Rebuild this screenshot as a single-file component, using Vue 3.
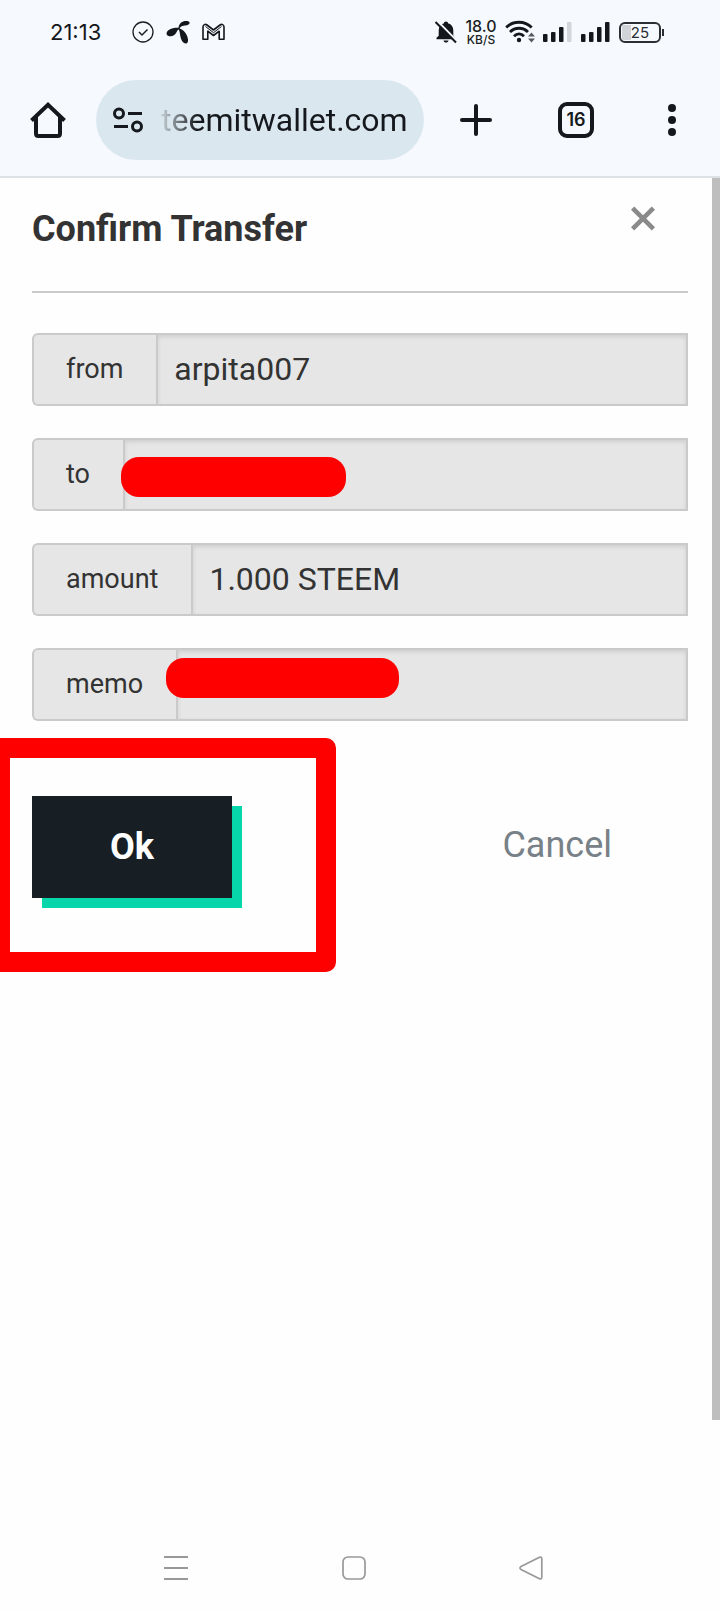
<script setup>
import { ref } from 'vue'

const url = ref('teemitwallet.com')
const fields = [
  { id: 'from', label: 'from', value: 'arpita007' },
  { id: 'to', label: 'to', value: '', hidden: true },
  { id: 'amount', label: 'amount', value: '1.000 STEEM' },
  { id: 'memo', label: 'memo', value: '', hidden: true },
]
</script>

<template>
  <div class="page">
    <header class="chrome">
      <div class="status">
        <div class="status-left">
          <span class="time">21:13</span>
          <svg width="24" height="24" viewBox="0 0 24 24" fill="none" stroke="#1b1f24">
            <circle cx="12" cy="12" r="10" stroke-width="1.300" />
            <path d="M8 12l3 3 5.500-5.500" stroke-width="1.500" />
          </svg>
          <svg width="24" height="24" viewBox="0 0 24 24" fill="#14181c">
            <path d="M12.500 7.800C13 3.500 16 1 20 1c2.200 0 3.600.6 3.600 1.800 0 2-3.100 2.700-6 3-2.200.3-3.500 1.200-4 2.600 3.200 1 5.600 3.400 7.300 7.200 1.500 3.600 1.700 7-.4 7.800-2.300.8-4.700-1.700-5.700-5.300-.9-3.200-.9-6.200-2-8.500-1 .1-1.500 1.300-2.300 2.700-1.300 2.400-3.500 4-6 4-2.500.1-4.500-1.500-3.800-3.800C1.800 9.500 7 7.500 12.500 7.800z" />
          </svg>
          <svg width="24" height="24" viewBox="0 0 24 24" fill="none" stroke="#14181c" stroke-width="1.600" stroke-linejoin="round">
            <path d="M2 19.200V7c0-2.400 2.300-3.300 4-2l6.500 5L19 5c1.700-1.300 4-.4 4 2v12.200h-4.800v-8l-5.700 4.300-5.700-4.300v8z" />
            <path d="M4.500 6.500l8 6.200 8-6.200" stroke-width="1" />
          </svg>
        </div>
        <div class="status-right">
          <svg width="22" height="24" viewBox="0 0 22 24">
            <path d="M11 1.500c1.300 0 2 .8 2 1.800 3.600 1 5.300 3.800 5.300 7.200v5.200l1.700 2v1.600H1.500v-1.600l2.200-2v-5.200C3.700 7 5.700 4.300 9 3.300c0-1 .7-1.800 2-1.800zM8.500 20.500h5c-.3 1.500-1.200 2-2.500 2s-2.200-.5-2.500-2z" fill="#14181c" />
            <path d="M2.200.8l20 20.500" stroke="#f6f9fe" stroke-width="2" />
            <path d="M.5 2l20.500 20.500" stroke="#14181c" stroke-width="2" />
          </svg>
          <div class="speed"><b>18.0</b><span>KB/S</span></div>
          <svg width="30" height="24" viewBox="0 0 30 24" fill="none" stroke="#14181c" stroke-width="2.800">
            <path d="M1.200 7.500c7-7 18.500-7 25.500 0M5 12c5-5 13-5 18 0M9 16.200c3-3 7-3 10 0" />
            <circle cx="14" cy="20" r="2.200" fill="#14181c" stroke="none" />
            <path d="M23 16.500l3.500-4 3.500 4zM23 18.500l3.500 4 3.500-4z" fill="#555a60" stroke="none" />
          </svg>
          <svg width="30" height="24" viewBox="0 0 30 24" fill="#14181c">
            <rect x="0" y="14" width="4.500" height="8" rx="1" /><rect x="8" y="12" width="4.500" height="10" rx="1" />
            <rect x="16" y="7" width="4.500" height="15" rx="1" /><rect x="24" y="2" width="4.500" height="20" rx="1" fill="#d3d6da" />
          </svg>
          <svg width="30" height="24" viewBox="0 0 30 24" fill="#14181c">
            <rect x="0" y="14" width="4.500" height="8" rx="1" /><rect x="8" y="12" width="4.500" height="10" rx="1" />
            <rect x="16" y="7" width="4.500" height="15" rx="1" /><rect x="24" y="2" width="4.500" height="20" rx="1" />
          </svg>
          <div class="battery"><span>25</span></div>
        </div>
      </div>

      <div class="toolbar">
        <button class="tool" type="button" aria-label="Home">
          <svg width="36" height="36" viewBox="0 0 36 36" fill="none" stroke="#15191d" stroke-width="4">
            <path d="M1.500 18.500L18 2.800l16.500 15.700" stroke-linejoin="miter" />
            <path d="M6 15v16.500c0 1.600.9 2.500 2.500 2.500h19c1.600 0 2.500-.9 2.500-2.500V15" />
          </svg>
        </button>
        <div class="address">
          <svg width="32" height="28" viewBox="0 0 32 28" fill="none" stroke="#15191d" stroke-width="3">
            <circle cx="7" cy="7.500" r="4.500" /><path d="M16 7.500h14M2 20.500h14" /><circle cx="25" cy="20.500" r="4.500" />
          </svg>
          <input v-model="url" class="url" type="text" aria-label="Address" />
        </div>
        <button class="tool tool-new" type="button" aria-label="New tab">
          <svg width="32" height="32" viewBox="0 0 32 32" stroke="#15191d" stroke-width="4" stroke-linecap="round">
            <path d="M16 2v28M2 16h28" />
          </svg>
        </button>
        <button class="tool" type="button" aria-label="Open tabs"><span class="tabs">16</span></button>
        <button class="tool" type="button" aria-label="Menu">
          <svg width="8" height="32" viewBox="0 0 8 32" fill="#15191d">
            <circle cx="4" cy="4" r="4" /><circle cx="4" cy="16" r="4" /><circle cx="4" cy="28" r="4" />
          </svg>
        </button>
      </div>
    </header>

    <main class="content">
      <div class="heading">
        <h1>Confirm Transfer</h1>
        <button class="close" type="button" aria-label="Close">
          <svg width="24" height="25" viewBox="0 0 24 25" stroke="#8a8a8a" stroke-width="4.600">
            <path d="M1.600 2.100l20.800 20.800M22.400 2.100L1.600 22.900" />
          </svg>
        </button>
      </div>
      <form class="form" @submit.prevent>
        <div v-for="f in fields" :key="f.id" class="field">
          <label :for="f.id">{{ f.label }}</label>
          <input :id="f.id" type="text" :value="f.value" readonly />
          <span v-if="f.hidden" class="mark" :class="'mark-' + f.id"></span>
        </div>
        <div class="actions">
          <button class="ok" type="submit">Ok</button>
          <button class="cancel" type="button">Cancel</button>
          <span class="frame"></span>
        </div>
      </form>
      <div class="scrollbar"></div>
    </main>

    <nav class="nav">
      <button type="button" aria-label="Recent apps">
        <svg width="24" height="24" viewBox="0 0 24 24" stroke="#989898" stroke-width="2"><path d="M0 1h24M0 12h24M0 23h24" /></svg>
      </button>
      <button type="button" aria-label="Home screen">
        <svg width="24" height="24" viewBox="0 0 24 24" fill="none" stroke="#989898" stroke-width="1.700"><rect x="1" y="1" width="22" height="22" rx="5" /></svg>
      </button>
      <button type="button" aria-label="Back">
        <svg width="24" height="24" viewBox="0 0 24 24" fill="none" stroke="#989898" stroke-width="1.700"><path d="M20.500 1.200L2 10.500c-1.300.7-1.300 2.300 0 3l18.500 9.300c1.200.5 2.300-.2 2.300-1.500V2.700c0-1.300-1.100-2-2.300-1.500z" /></svg>
      </button>
    </nav>
  </div>
</template>

<style>
body { margin: 0; background: #fefefe; }
</style>

<style scoped>
* { box-sizing: border-box; }
.page {
  display: flex;
  flex-direction: column;
  min-height: 100vh;
  overflow: hidden;
  font-family: Roboto, "Liberation Sans", sans-serif;
  color: #333;
  background: #fefefe;
}
button { padding: 0; border: 0; background: none; font-family: inherit; cursor: pointer; }
svg { display: block; flex: none; overflow: visible; }

.chrome { background: #f6f9fe; border-bottom: 2px solid #dbe3e8; }
.status { display: flex; justify-content: space-between; align-items: center; height: 64px; padding: 0 56px 0 50px; }
.status-left { display: flex; align-items: center; gap: 11px; }
.time { width: 70px; font: 400 22px/24px Inter, sans-serif; color: #14181c; }
.status-right { display: flex; align-items: center; gap: 8px; }
.speed { display: flex; flex-direction: column; align-items: center; width: 32px; font: 500 12px/12px Inter, sans-serif; color: #1b1f24; }
.speed b { font-size: 16px; line-height: 16px; font-weight: 500; }
.battery {
  position: relative;
  width: 42px;
  height: 21px;
  margin-right: 3px;
  border: 2px solid #2b2f34;
  border-radius: 6px;
  background: linear-gradient(#d0d3d7, #d0d3d7) 1px 1px / 9px 15px no-repeat;
  font: 15px/17px Inter, sans-serif;
  text-align: center;
  color: #2b2f34;
}
.battery::after { content: ""; position: absolute; right: -5px; top: 5px; width: 2px; height: 7px; background: #2b2f34; }

.toolbar { display: flex; align-items: center; height: 112px; }
.tool { display: flex; align-items: center; justify-content: center; width: 96px; height: 80px; }
.tool-new { width: 104px; }
.address {
  display: flex;
  flex: 1;
  align-items: center;
  gap: 17px;
  min-width: 0;
  height: 80px;
  padding: 0 16px;
  border-radius: 40px;
  background: #dbe7ee;
}
.url {
  flex: 1;
  min-width: 0;
  padding: 0;
  border: 0;
  outline: 0;
  background: none;
  font: 32px/40px Roboto, sans-serif;
  color: #15191d;
  -webkit-mask-image: linear-gradient(90deg, rgba(0, 0, 0, 0.1), #000 36px);
  mask-image: linear-gradient(90deg, rgba(0, 0, 0, 0.1), #000 36px);
}
.tabs {
  width: 36px;
  height: 36px;
  border: 4px solid #15191d;
  border-radius: 9px;
  font: 600 18px/28px Inter, sans-serif;
  text-align: center;
  color: #15191d;
}

.content { position: relative; flex: 1; padding: 26px 32px 40px; }
.heading { display: flex; justify-content: space-between; align-items: flex-start; padding-bottom: 37px; border-bottom: 2px solid #cacaca; }
h1 { margin: 0; font-size: 36px; line-height: 50px; font-weight: 700; }
.close { margin: 2px 33px 0 0; }
.form { display: flex; flex-direction: column; gap: 32px; padding-top: 40px; }
.field { position: relative; display: flex; height: 73px; }
.field label {
  display: flex;
  align-items: center;
  padding: 0 33px 1px 32px;
  border: 2px solid #cacaca;
  border-right: 0;
  border-radius: 6px 0 0 6px;
  background: #e6e6e6;
  font-size: 27px;
}
.field input {
  flex: 1;
  min-width: 0;
  padding: 0 16px 1px;
  border: 2px solid #cacaca;
  border-radius: 0;
  outline: 0;
  background: #e6e6e6;
  box-shadow: inset 0 2px 4px rgba(10, 10, 10, 0.1);
  font: 32px/40px Roboto, sans-serif;
  color: #333;
}
.mark { position: absolute; height: 40px; border-radius: 18px; background: #f00; }
.mark-to { left: 89px; top: 19px; width: 225px; }
.mark-memo { left: 134px; top: 10px; width: 233px; }

.actions { position: relative; display: flex; justify-content: space-between; align-items: flex-start; margin-top: 43px; }
.ok {
  width: 200px;
  height: 102px;
  background: #171f24;
  box-shadow: 10px 10px 0 #06d6a9;
  font-size: 36px;
  font-weight: 700;
  color: #fff;
}
.cancel { height: 98px; padding: 0 76px; font-size: 36px; color: #788187; }
.frame {
  position: absolute;
  left: -42px;
  top: -58px;
  width: 346px;
  height: 234px;
  border: 20px solid #f00;
  border-radius: 10px;
  pointer-events: none;
}
.scrollbar { position: absolute; top: 0; right: 0; bottom: 104px; width: 8px; background: #bebebe; }

.nav { display: flex; justify-content: space-between; align-items: center; height: 88px; padding: 0 177px 0 164px; }
</style>
